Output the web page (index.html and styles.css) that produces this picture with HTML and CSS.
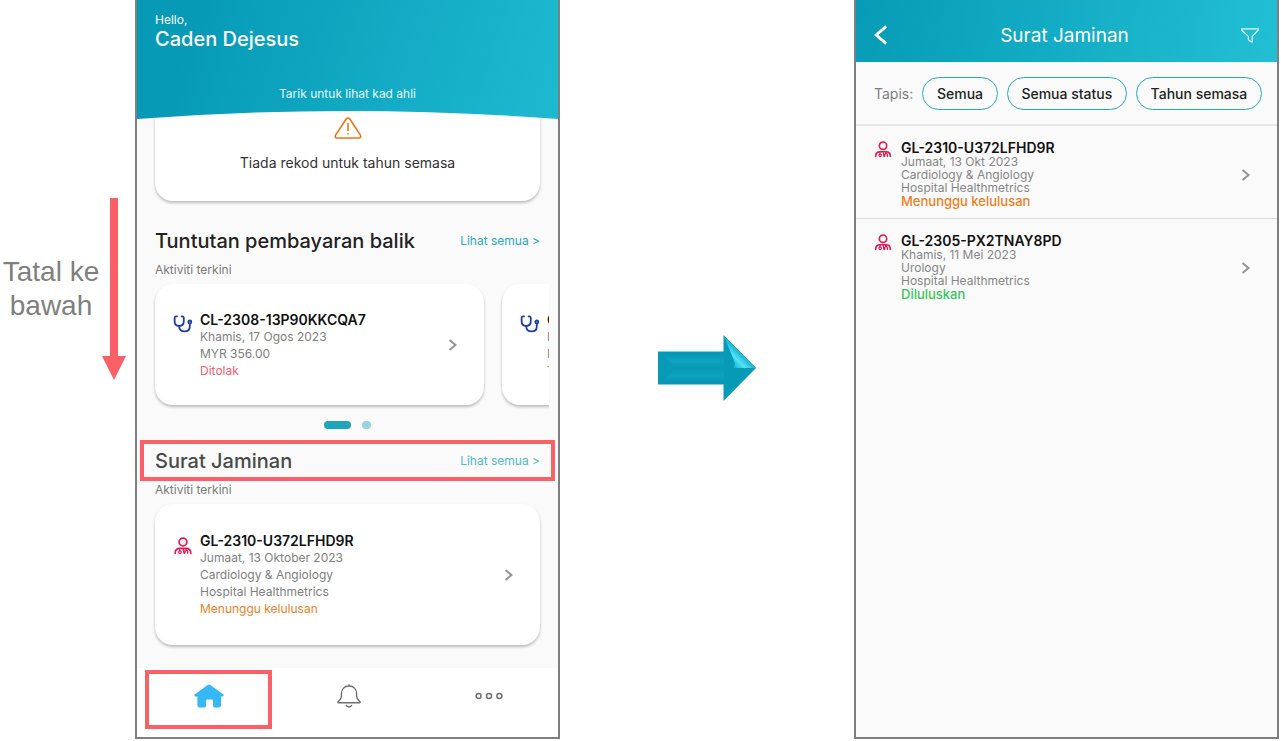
FILE: index.html
```html
<!DOCTYPE html>
<html lang="ms">
<head>
  <meta charset="UTF-8">
  <meta name="viewport" content="width=device-width, initial-scale=1.0">
  <title>Surat Jaminan</title>
  <link rel="stylesheet" href="styles.css">
</head>
<body>
  <!-- shared icons -->
  <svg class="sprite" aria-hidden="true">
    <symbol id="icon-chevron" viewBox="0 0 10 12">
      <path d="M1.5 1 L7.5 6 L1.5 11" fill="none" stroke="#949494" stroke-width="2"/>
    </symbol>
    <symbol id="icon-stethoscope" viewBox="0 0 20 18">
      <g fill="none" stroke="#1c3f9f" stroke-width="1.8" stroke-linecap="round" stroke-linejoin="round">
        <path d="M4 1.4 H3 Q1.6 1.4 1.6 3 V6 C1.6 9 3.5 11 6.2 11 C9 11 10.8 9 10.8 6 V3 Q10.8 1.4 9.4 1.4 H8.6"/>
        <path d="M6.2 11 C6.2 14.5 8.4 16.4 11.6 16.4 C14.8 16.4 16.8 14.4 16.8 11.4 V8.6"/>
        <circle cx="16.8" cy="7" r="1.5"/>
      </g>
    </symbol>
    <symbol id="icon-doctor" viewBox="0 0 18 18">
      <g fill="none" stroke="#e9164f" stroke-width="1.7" stroke-linecap="round">
        <circle cx="9" cy="5" r="3.9"/>
        <path d="M1.2 16.3 C1.2 12.8 3.6 11.4 6 11.4 H12 C14.4 11.4 16.8 12.8 16.8 16.3"/>
        <path d="M5.8 11.6 V13.6 M12 11.6 V13" stroke-width="1.3"/>
        <circle cx="6" cy="15.2" r="1.3" stroke-width="1.2"/>
        <path d="M9.2 11.6 L10 16.2 M10.8 16.3 C10.8 14 11.4 13.2 12.2 13.2 C13.2 13.2 13.8 14 13.8 16.3" stroke-width="1.3"/>
      </g>
    </symbol>
  </svg>

  <main class="guide">
    <aside class="hint">
      <p class="hint-text">Tatal ke bawah</p>
      <svg class="hint-arrow" viewBox="0 0 24 182" aria-hidden="true">
        <path d="M8 0 H16 V158 H24 L12 182 L0 158 H8 Z" fill="#fa6066"/>
      </svg>
    </aside>

    <section class="phone">
      <header class="hero">
        <svg class="hero-bg" viewBox="0 0 422 119" preserveAspectRatio="none" aria-hidden="true">
          <defs>
            <linearGradient id="hero-fill" gradientUnits="userSpaceOnUse" x1="40" y1="70" x2="400" y2="180">
              <stop offset="0" stop-color="#069ab6"/>
              <stop offset="1" stop-color="#1eb9d1"/>
            </linearGradient>
          </defs>
          <path d="M0 0 H422 V119 Q211 103 0 119 Z" fill="url(#hero-fill)"/>
        </svg>
        <p class="hero-hello">Hello,</p>
        <h1 class="hero-name">Caden Dejesus</h1>
        <p class="hero-pull">Tarik untuk lihat kad ahli</p>
      </header>

      <div class="content">
        <div class="card empty-card">
          <svg class="warning" viewBox="0 0 28 22" aria-hidden="true">
            <g fill="none" stroke="#ee7412" stroke-width="1.6" stroke-linejoin="round" stroke-linecap="round">
              <path d="M12.2 2 Q14 0 15.8 2 L26.6 18.4 Q27.4 20.8 25 21 H3 Q0.6 20.8 1.4 18.4 Z"/>
              <path d="M14 6.5 V13.5 M14 16.8 V17"/>
            </g>
          </svg>
          <p>Tiada rekod untuk tahun semasa</p>
        </div>

        <div class="section-head">
          <h2>Tuntutan pembayaran balik</h2>
          <a href="#">Lihat semua &gt;</a>
        </div>
        <p class="section-label">Aktiviti terkini</p>
        <div class="carousel">
          <a class="card record" href="#">
            <svg class="record-icon"><use href="#icon-stethoscope"/></svg>
            <span class="record-text">
              <strong>CL-2308-13P90KKCQA7</strong>
              <span>Khamis, 17 Ogos 2023</span>
              <span>MYR 356.00</span>
              <span class="rejected">Ditolak</span>
            </span>
            <svg class="chevron"><use href="#icon-chevron"/></svg>
          </a>
          <a class="card record" href="#">
            <svg class="record-icon"><use href="#icon-stethoscope"/></svg>
            <span class="record-text">
              <strong>CL</strong>
              <span>Khamis</span>
              <span>MYR</span>
              <span class="pending">Tertunda</span>
            </span>
            <svg class="chevron"><use href="#icon-chevron"/></svg>
          </a>
        </div>
        <div class="dots"><span class="dot active"></span><span class="dot"></span></div>

        <div class="section-head highlight">
          <h2>Surat Jaminan</h2>
          <a href="#">Lihat semua &gt;</a>
        </div>
        <p class="section-label">Aktiviti terkini</p>
        <a class="card record tall" href="#">
          <svg class="record-icon"><use href="#icon-doctor"/></svg>
          <span class="record-text">
            <strong>GL-2310-U372LFHD9R</strong>
            <span>Jumaat, 13 Oktober 2023</span>
            <span>Cardiology &amp; Angiology</span>
            <span>Hospital Healthmetrics</span>
            <span class="pending">Menunggu kelulusan</span>
          </span>
          <svg class="chevron"><use href="#icon-chevron"/></svg>
        </a>
      </div>

      <nav class="tabs">
        <a class="tab current" href="#" aria-label="Utama">
          <svg width="30" height="24" viewBox="0 0 30 24">
            <path d="M15 0.4 Q15.6 0.4 16.4 1 L29.4 10.6 Q30.4 12.2 28.6 12.6 H27 V21.6 Q27 23.4 25.2 23.4 H20.4 Q19 23.4 19 22 V17 Q19 15.6 17.6 15.6 H13.4 Q12 15.6 12 17 V22 Q12 23.4 10.6 23.4 H5.2 Q3.4 23.4 3.4 21.6 V12.6 H1.4 Q-0.4 12.2 0.6 10.6 L13.6 1 Q14.4 0.4 15 0.4 Z" fill="#36b7f6"/>
          </svg>
        </a>
        <a class="tab" href="#" aria-label="Notifikasi">
          <svg width="24" height="24" viewBox="0 0 24 24">
            <g fill="none" stroke="#707070" stroke-width="1.4" stroke-linecap="round" stroke-linejoin="round">
              <path d="M12 0.8 V2 M12 2 C7.4 2 4.4 5.2 4.4 9.4 V12 C4.4 15 2.6 16 1.2 17.4 C0.6 18.4 0.9 18.8 1.6 18.8 H22.4 C23.1 18.8 23.4 18.4 22.8 17.4 C21.4 16 19.6 15 19.6 12 V9.4 C19.6 5.2 16.6 2 12 2 Z"/>
              <path d="M9.4 21.6 Q12 24.4 14.6 21.6"/>
            </g>
          </svg>
        </a>
        <a class="tab" href="#" aria-label="Lagi">
          <svg width="28" height="8" viewBox="0 0 28 8">
            <g fill="none" stroke="#707070" stroke-width="1.5">
              <circle cx="3.6" cy="4" r="2.5"/>
              <circle cx="14" cy="4" r="2.5"/>
              <circle cx="24.4" cy="4" r="2.5"/>
            </g>
          </svg>
        </a>
      </nav>
    </section>

    <div class="next">
      <svg width="98" height="66" viewBox="0 0 98 66" aria-hidden="true">
        <defs>
          <linearGradient id="shaft" x1="0" y1="0" x2="0" y2="1">
            <stop offset="0" stop-color="#0594b1"/>
            <stop offset="0.28" stop-color="#0ea3c0"/>
            <stop offset="0.5" stop-color="#0798b5"/>
            <stop offset="0.75" stop-color="#0da2bf"/>
            <stop offset="1" stop-color="#0594b1"/>
          </linearGradient>
          <linearGradient id="shine" gradientUnits="userSpaceOnUse" x1="74" y1="30" x2="86" y2="18">
            <stop offset="0" stop-color="#18b4d0"/>
            <stop offset="0.45" stop-color="#4fe3fb"/>
            <stop offset="1" stop-color="#0b9fbb"/>
          </linearGradient>
        </defs>
        <path d="M0 16.5 H65.5 V0 L98 33 L65.5 66 V49.5 H0 Z" fill="#069ab7"/>
        <path d="M4 17.5 H66 V48.5 H4 L16 33 Z" fill="url(#shaft)"/>
        <path d="M66 1 L98 33 H76 L77 28 Z" fill="url(#shine)"/>
      </svg>
    </div>

    <section class="phone">
      <header class="topbar">
        <button class="icon-btn" type="button" aria-label="Kembali">
          <svg width="14" height="20" viewBox="0 0 14 20">
            <path d="M12.2 1.4 L2.2 10 L12.2 18.6" fill="none" stroke="#fff" stroke-width="2.8"/>
          </svg>
        </button>
        <h1>Surat Jaminan</h1>
        <button class="icon-btn" type="button" aria-label="Tapis">
          <svg width="18" height="15" viewBox="0 0 18 15">
            <path d="M0.8 0.8 H17.2 V2.2 L11.2 8.4 V14.2 L7.4 12 V8.4 L0.8 2.2 Z" fill="none" stroke="#e4f7fa" stroke-width="1.2" stroke-linejoin="round"/>
          </svg>
        </button>
      </header>

      <div class="filters">
        <span>Tapis:</span>
        <button type="button">Semua</button>
        <button type="button">Semua status</button>
        <button type="button">Tahun semasa</button>
      </div>

      <div class="letters">
        <a class="letter" href="#">
          <svg class="letter-icon"><use href="#icon-doctor"/></svg>
          <span class="letter-text">
            <strong>GL-2310-U372LFHD9R</strong>
            <span>Jumaat, 13 Okt 2023</span>
            <span>Cardiology &amp; Angiology</span>
            <span>Hospital Healthmetrics</span>
            <em class="pending">Menunggu kelulusan</em>
          </span>
          <svg class="chevron"><use href="#icon-chevron"/></svg>
        </a>
        <a class="letter" href="#">
          <svg class="letter-icon"><use href="#icon-doctor"/></svg>
          <span class="letter-text">
            <strong>GL-2305-PX2TNAY8PD</strong>
            <span>Khamis, 11 Mei 2023</span>
            <span>Urology</span>
            <span>Hospital Healthmetrics</span>
            <em class="approved">Diluluskan</em>
          </span>
          <svg class="chevron"><use href="#icon-chevron"/></svg>
        </a>
      </div>
    </section>
  </main>
</body>
</html>
```

FILE: styles.css
```css
* {
  box-sizing: border-box;
}
body {
  margin: 0;
  background: #fff;
  font-family: Inter, "Liberation Sans", sans-serif;
  font-size: 12px;
  color: #222;
}
h1, h2, p {
  margin: 0;
}
a {
  color: inherit;
  text-decoration: none;
}
button {
  font: inherit;
  cursor: pointer;
}
svg {
  display: block;
  flex: none;
}
.sprite {
  position: absolute;
  width: 0;
  height: 0;
}
.guide {
  display: grid;
  grid-template-columns: 135fr 425fr 294fr 425fr;
  min-height: 100vh;
  padding: 0 2px 2px 0;
}

/* scroll hint */
.hint {
  display: flex;
  align-items: center;
  align-self: start;
  justify-content: flex-end;
  padding: 198px 9px 0 0;
}
.hint-text {
  width: 102px;
  font-family: "Liberation Sans", Arial, sans-serif;
  font-size: 28px;
  line-height: 34px;
  text-align: center;
  color: #7f7f7f;
}
.hint-arrow {
  width: 24px;
  height: 182px;
}

.phone {
  display: flex;
  flex-direction: column;
  min-width: 0;
  background: #fafafa;
  border: 2px solid #7f7f7f;
  border-top: none;
}

/* home screen */
.hero {
  position: relative;
  z-index: 1;
  height: 119px;
  padding: 12px 18px 0;
  color: #fff;
}
.hero-bg {
  position: absolute;
  inset: 0;
  z-index: -1;
  width: 100%;
  height: 100%;
}
.hero-hello {
  font-size: 12px;
  line-height: 16px;
}
.hero-name {
  font-size: 20px;
  font-weight: 500;
  line-height: 22px;
}
.hero-pull {
  margin-top: 36px;
  font-size: 12px;
  line-height: 16px;
  text-align: center;
  color: #e4f7fa;
}
.content {
  padding: 0 18px 23px;
}
.card {
  background: #fff;
  border-radius: 18px;
  box-shadow: 0 2px 3px rgba(0, 0, 0, 0.25);
}
.empty-card {
  display: flex;
  flex-direction: column;
  align-items: center;
  gap: 14px;
  height: 101px;
  margin: -19px 0 19px;
  padding-top: 17px;
  font-size: 14px;
  line-height: 20px;
  color: #333;
}
.warning {
  width: 28px;
  height: 22px;
}
.section-head {
  display: flex;
  align-items: center;
  justify-content: space-between;
  height: 41px;
}
.section-head h2 {
  font-size: 20px;
  font-weight: 500;
}
.section-head a {
  font-size: 12px;
  color: #2ba9bf;
}
.highlight {
  margin: 0 -15px;
  padding: 0 11px;
  border: 4px solid #fa6066;
}
.highlight h2 {
  color: #4a4a4a;
}
.highlight a {
  color: #4fb8ca;
}
.section-label {
  margin: 1px 0 6px;
  font-size: 12px;
  line-height: 16px;
  color: #7a7a7a;
}
.carousel {
  display: flex;
  gap: 18px;
  margin: 0 -9px -6px -6px;
  padding: 0 0 6px 6px;
  overflow: hidden;
}
.carousel .card {
  flex: 0 0 calc(100% - 65px);
}
.record {
  display: flex;
  align-items: center;
  gap: 7px;
  height: 121px;
  padding: 0 26px 0 18px;
  line-height: 17px;
  color: #808080;
}
.record.tall {
  height: 141px;
}
.record-icon {
  align-self: flex-start;
  width: 20px;
  height: 18px;
  margin-top: 31px;
}
.tall .record-icon {
  margin-top: 33px;
}
.record-text {
  display: flex;
  flex: 1;
  flex-direction: column;
}
.record strong, .letter strong {
  font-size: 14px;
  font-weight: 600;
  color: #111;
}
.chevron {
  width: 10px;
  height: 12px;
}
.record .pending, .letter .pending {
  color: #ee7f22;
}
.record .rejected {
  color: #f2606f;
}
.letter .approved {
  color: #35c759;
}
.dots {
  display: flex;
  justify-content: center;
  gap: 11px;
  padding: 16px 0 11px;
}
.dot {
  width: 9px;
  height: 8px;
  border-radius: 4px;
  background: #97d4df;
}
.dot.active {
  width: 27px;
  background: #1ea4bb;
}
.tabs {
  display: grid;
  grid-template-columns: repeat(3, 1fr);
  height: 69px;
  margin-top: auto;
  background: #fff;
}
.tab {
  display: flex;
  align-items: center;
  justify-content: center;
  margin: 2px 5px 8px 8px;
  padding-bottom: 8px;
  border: 4px solid transparent;
}
.tab.current {
  border-color: #fa6066;
}

.next {
  display: flex;
  align-items: center;
  justify-content: center;
  padding-bottom: 3px;
}

/* letters screen */
.topbar {
  display: flex;
  align-items: center;
  justify-content: space-between;
  height: 62px;
  padding: 8px 18px 0;
  background: linear-gradient(100deg, #079bb6, #22bfd4);
  color: #fff;
}
.topbar h1 {
  font-size: 19px;
  font-weight: 400;
}
.icon-btn {
  padding: 0;
  border: none;
  background: none;
}
.filters {
  display: flex;
  align-items: center;
  gap: 9px;
  height: 64px;
  padding: 0 15px 0 18px;
  border-bottom: 2px solid #e6e6e6;
  font-size: 14px;
  color: #808080;
}
.filters button {
  flex: auto;
  height: 33px;
  padding: 0 12px;
  border: 1px solid #27a8bf;
  border-radius: 17px;
  background: #fafafa;
  font-weight: 500;
  color: #222;
}
.letter {
  display: flex;
  align-items: center;
  gap: 9px;
  padding: 15px 26px 10px 18px;
  border-bottom: 1px solid #dcdcdc;
  line-height: 13px;
  color: #868686;
}
.letter:last-child {
  border-bottom: none;
}
.letter-icon {
  align-self: flex-start;
  width: 18px;
  height: 17px;
}
.letter-text {
  display: flex;
  flex: 1;
  flex-direction: column;
}
.letter strong, .letter em {
  line-height: 14px;
}
.letter em {
  font-size: 13px;
  font-style: normal;
  font-weight: 500;
}
```
